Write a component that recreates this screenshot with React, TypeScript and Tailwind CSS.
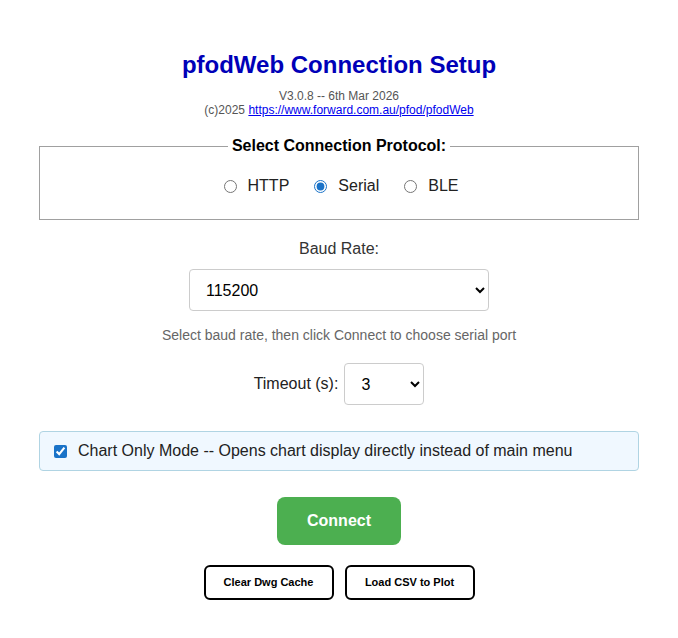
import React, { useState } from "react";

export default function App() {
  const [proto, setProto] = useState("serial");
  const [baud, setBaud] = useState("115200");
  const [timeout, setTimeoutVal] = useState("3");
  const [chartOnly, setChartOnly] = useState(true);

  return (
    <div
      className="w-full min-h-[638px] bg-white text-[#333]"
      style={{ fontFamily: '"Liberation Sans", Arial, sans-serif' }}
    >
      <div className="w-[600px] mx-auto pt-[51px] flex flex-col items-center">
        <h1 className="text-[24px] leading-[28px] font-bold text-[#0000b8] m-0">
          pfodWeb Connection Setup
        </h1>
        <div className="mt-[10px] text-[12px] leading-[14px] text-[#555] text-center">
          <div>V3.0.8 -- 6th Mar 2026</div>
          <div>
            (c)2025{" "}
            <a href="#" className="text-[#0000ee] underline">
              https://www.forward.com.au/pfod/pfodWeb
            </a>
          </div>
        </div>

        <fieldset className="mt-[20px] w-full border border-[#a0a0a0] pt-[21px] pb-[23px] px-[10px]">
          <legend className="mx-auto px-[4px] text-[16px] leading-[18px] font-bold text-black">
            Select Connection Protocol:
          </legend>
          <div className="flex justify-center items-center h-[20px] pl-[4px] text-[16px] text-[#222]">
            {[
              ["http", "HTTP"],
              ["serial", "Serial"],
              ["ble", "BLE"],
            ].map(([v, l], i) => (
              <label
                key={v}
                className={`flex items-center ${i > 0 ? "ml-[25px]" : ""}`}
              >
                <input
                  type="radio"
                  name="proto"
                  checked={proto === v}
                  onChange={() => setProto(v)}
                  className="w-[13px] h-[13px] m-0 accent-[#1a73c8]"
                />
                <span className="ml-[11px]">{l}</span>
              </label>
            ))}
          </div>
        </fieldset>

        <div className="mt-[20px] text-[16px] leading-[18px] text-[#333]">
          Baud Rate:
        </div>
        <select
          value={baud}
          onChange={(e) => setBaud(e.target.value)}
          className="mt-[11px] w-[300px] h-[42px] border border-[#ccc] rounded-[4px] pl-[12px] pr-[8px] text-[16px] text-black bg-white"
          style={{ fontFamily: '"Liberation Sans", Arial, sans-serif' }}
        >
          <option>9600</option>
          <option>57600</option>
          <option>115200</option>
        </select>

        <div className="mt-[16px] text-[14px] leading-[16px] text-[#666]">
          Select baud rate, then click Connect to choose serial port
        </div>

        <div className="mt-[20px] flex items-center">
          <span className="text-[16px] text-[#222]">Timeout (s):</span>
          <select
            value={timeout}
            onChange={(e) => setTimeoutVal(e.target.value)}
            className="ml-[6px] w-[80px] h-[42px] border border-[#ccc] rounded-[4px] pl-[12px] pr-[6px] text-[16px] text-black bg-white"
            style={{ fontFamily: '"Liberation Sans", Arial, sans-serif' }}
          >
            <option>1</option>
            <option>2</option>
            <option>3</option>
            <option>5</option>
            <option>10</option>
          </select>
        </div>

        <label className="mt-[26px] w-full h-[40px] flex items-center bg-[#f0f8ff] border border-[#b0d4e3] rounded-[4px] pl-[14px] text-[16px] text-[#222]">
          <input
            type="checkbox"
            checked={chartOnly}
            onChange={(e) => setChartOnly(e.target.checked)}
            className="w-[13px] h-[13px] m-0 accent-[#1a73c8]"
          />
          <span className="ml-[11px]">
            Chart Only Mode -- Opens chart display directly instead of main menu
          </span>
        </label>

        <button className="mt-[26px] w-[124px] h-[48px] bg-[#4caf50] text-white text-[16px] font-bold rounded-[8px]">
          Connect
        </button>

        <div className="mt-[20px] flex gap-[11px]">
          <button className="w-[130px] h-[35px] border-2 border-black rounded-[6px] bg-white text-[11px] font-bold text-black">
            Clear Dwg Cache
          </button>
          <button className="w-[130px] h-[35px] border-2 border-black rounded-[6px] bg-white text-[11px] font-bold text-black">
            Load CSV to Plot
          </button>
        </div>
      </div>
    </div>
  );
}
